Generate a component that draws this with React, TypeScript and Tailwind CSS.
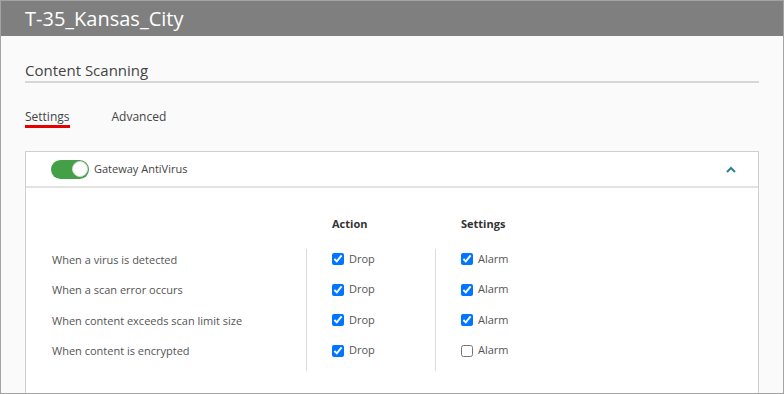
import React from "react";

const rows = [
  { label: "When a virus is detected", drop: true, alarm: true },
  { label: "When a scan error occurs", drop: true, alarm: true },
  { label: "When content exceeds scan limit size", drop: true, alarm: true },
  { label: "When content is encrypted", drop: true, alarm: false },
];

function Check({ checked, label }: { checked: boolean; label: string }) {
  return (
    <label className="flex items-center h-[20px]">
      <input
        type="checkbox"
        defaultChecked={checked}
        className="m-0 w-[12px] h-[12px] accent-[#0075ff]"
      />
      <span className="ml-[5px] text-[11px] text-[#555]">{label}</span>
    </label>
  );
}

export default function App() {
  return (
    <div
      className="w-[784px] h-[394px] overflow-hidden border border-[#a3a3a3] bg-[#fafafa] text-[#333]"
      style={{ fontFamily: "'Open Sans', 'Noto Sans', sans-serif" }}
    >
      <div className="h-[35px] bg-[#7f7f7f] flex items-center pl-[24px] text-white text-[20px] leading-none">
        T-35_Kansas_City
      </div>
      <div className="px-[24px]">
        <div className="mt-[24px] h-[23px] text-[15px] leading-[21px] text-[#444] border-b-2 border-[#d6d6d6]">
          Content Scanning
        </div>
        <div className="mt-[25px] flex gap-[42px] text-[12px] leading-[17px] text-[#444]">
          <div className="border-b-[3px] border-[#e60000]">Settings</div>
          <div className="border-b-[3px] border-transparent">Advanced</div>
        </div>
        <div className="mt-[23px] bg-white border border-[#cfcfcf] h-[260px]">
          <div className="h-[36px] flex items-center border-b-2 border-[#e3e3e3] pl-[25px] pr-[22px]">
            <div className="w-[38px] h-[19px] rounded-full bg-[#43a047] relative">
              <div className="absolute right-[1px] top-[1.5px] w-[16px] h-[16px] rounded-full bg-white border border-[#d8d8d8]" />
            </div>
            <span className="ml-[5px] text-[11px] text-[#444]">Gateway AntiVirus</span>
            <svg className="ml-auto" width="10" height="7" viewBox="0 0 10 7">
              <path d="M1 6 L5 2 L9 6" fill="none" stroke="#2f7f91" strokeWidth="2" />
            </svg>
          </div>
          <div className="pl-[26px] pt-[26px] grid grid-cols-[254px_129px_1fr]">
            <div className="h-[20px]" />
            <div className="h-[20px] pl-[25px] border-l border-transparent flex items-center font-bold text-[11px] text-[#333]">
              Action
            </div>
            <div className="h-[20px] pl-[25px] border-l border-transparent flex items-center font-bold text-[11px] text-[#333]">
              Settings
            </div>
            <div className="mt-[15px] flex flex-col gap-[10.5px] pb-[10.5px]">
              {rows.map((r) => (
                <div key={r.label} className="h-[20px] flex items-center text-[11px] text-[#555] pt-[2px]">
                  {r.label}
                </div>
              ))}
            </div>
            <div className="mt-[15px] flex flex-col gap-[10.5px] pb-[10.5px] pl-[25px] border-l border-[#dcdcdc]">
              {rows.map((r) => (
                <Check key={r.label} checked={r.drop} label="Drop" />
              ))}
            </div>
            <div className="mt-[15px] flex flex-col gap-[10.5px] pb-[10.5px] pl-[25px] border-l border-[#dcdcdc] self-start">
              {rows.map((r) => (
                <Check key={r.label} checked={r.alarm} label="Alarm" />
              ))}
            </div>
          </div>
        </div>
      </div>
    </div>
  );
}
